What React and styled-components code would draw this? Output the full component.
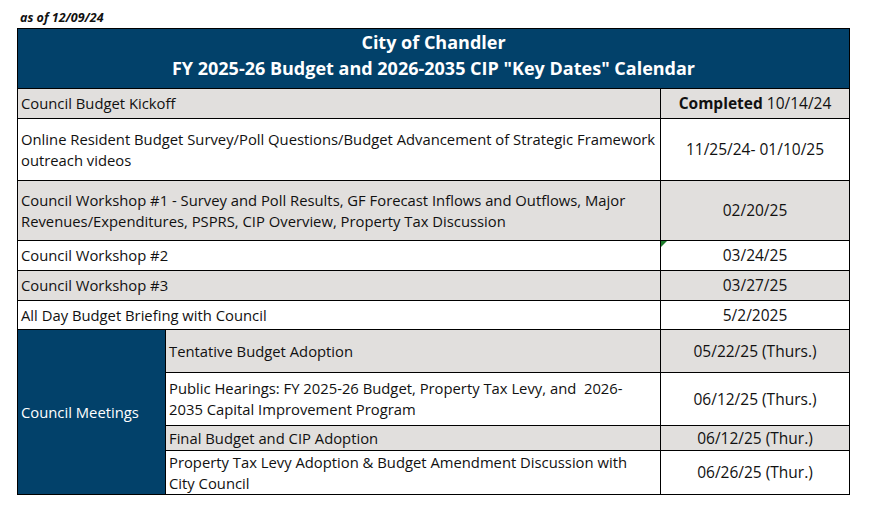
import React from 'react';
import styled, { createGlobalStyle } from 'styled-components';

const GlobalStyle = createGlobalStyle`
  body {
    margin: 0;
    background: #fff;
    font-family: "Open Sans", "Liberation Sans", sans-serif;
    color: #111;
  }
`;

const Page = styled.div`
  width: 869px;
  height: 519px;
  padding: 9px 0 0 17px;
  box-sizing: border-box;
`;

const AsOf = styled.div`
  font-size: 12.5px;
  font-weight: 700;
  font-style: italic;
  line-height: 18px;
  padding-left: 3px;
  height: 19px;
`;

const Table = styled.table`
  border-collapse: collapse;
  table-layout: fixed;
  width: 832px;
  font-size: 14.8px;
  line-height: 21px;
`;

const HeaderCell = styled.th`
  background: #02416a;
  color: #fff;
  font-size: 18px;
  font-weight: 700;
  line-height: 26px;
  height: 52px;
  padding: 0 0 7px;
  border: 1px solid #000;
  text-align: center;
  vertical-align: middle;
`;

const Row = styled.tr`
  background: ${(p) => (p.$shaded ? '#e1dfdd' : '#fff')};
  height: ${(p) => p.$h}px;
`;

const Cell = styled.td`
  border: 1px solid #000;
  padding: 0 ${(p) => (p.$narrow ? 9 : 3)}px 0 3px;
  vertical-align: middle;
  text-align: left;
`;

const DateCell = styled.td`
  position: relative;
  border: 1px solid #000;
  padding: 0 3px;
  font-size: 15.5px;
  vertical-align: middle;
  text-align: center;
`;

const GroupCell = styled.td`
  background: #02416a;
  color: #fff;
  border: 1px solid #000;
  padding: 0 3px;
  vertical-align: middle;
`;

const CommentMark = styled.span`
  position: absolute;
  top: 0;
  left: 0;
  width: 0;
  height: 0;
  border-top: 6px solid #1c7a2a;
  border-right: 6px solid transparent;
`;

const rows = [
  { task: 'Council Budget Kickoff', date: <><b>Completed</b> 10/14/24</>, shaded: true, h: 30 },
  {
    task: 'Online Resident Budget Survey/Poll Questions/Budget Advancement of Strategic Framework outreach videos',
    date: '11/25/24- 01/10/25',
    h: 62,
  },
  {
    task: 'Council Workshop #1 - Survey and Poll Results, GF Forecast Inflows and Outflows, Major Revenues/Expenditures, PSPRS, CIP Overview, Property Tax Discussion',
    date: '02/20/25',
    shaded: true,
    h: 60,
  },
  { task: 'Council Workshop #2', date: '03/24/25', h: 30, comment: true },
  { task: 'Council Workshop #3', date: '03/27/25', shaded: true, h: 30 },
  { task: 'All Day Budget Briefing with Council', date: '5/2/2025', h: 29 },
];

const meetings = [
  { task: 'Tentative Budget Adoption', date: '05/22/25 (Thurs.)', shaded: true, h: 43 },
  {
    task: 'Public Hearings: FY 2025-26 Budget, Property Tax Levy, and\u00a0 2026-2035 Capital Improvement Program',
    date: '06/12/25 (Thurs.)',
    h: 53,
  },
  { task: 'Final Budget and CIP Adoption', date: '06/12/25 (Thur.)', shaded: true, h: 25 },
  {
    task: 'Property Tax Levy Adoption & Budget Amendment Discussion with City Council',
    date: '06/26/25 (Thur.)',
    h: 44,
  },
];

const App = () => {
  return (
    <Page>
      <GlobalStyle />
      <AsOf>as of 12/09/24</AsOf>
      <Table>
        <colgroup>
          <col style={{ width: 148 }} />
          <col style={{ width: 495 }} />
          <col style={{ width: 189 }} />
        </colgroup>
        <thead>
          <tr>
            <HeaderCell colSpan={3}>
              City of Chandler
              <br />
              FY 2025-26 Budget and 2026-2035 CIP "Key Dates" Calendar
            </HeaderCell>
          </tr>
        </thead>
        <tbody>
          {rows.map((r, i) => (
            <Row key={i} $shaded={r.shaded} $h={r.h}>
              <Cell colSpan={2}>{r.task}</Cell>
              <DateCell>
                {r.comment ? <CommentMark /> : null}
                {r.date}
              </DateCell>
            </Row>
          ))}
          {meetings.map((m, i) => (
            <Row key={`m${i}`} $shaded={m.shaded} $h={m.h}>
              {i === 0 ? <GroupCell rowSpan={meetings.length}>Council Meetings</GroupCell> : null}
              <Cell $narrow>{m.task}</Cell>
              <DateCell>{m.date}</DateCell>
            </Row>
          ))}
        </tbody>
      </Table>
    </Page>
  );
};

export default App;
